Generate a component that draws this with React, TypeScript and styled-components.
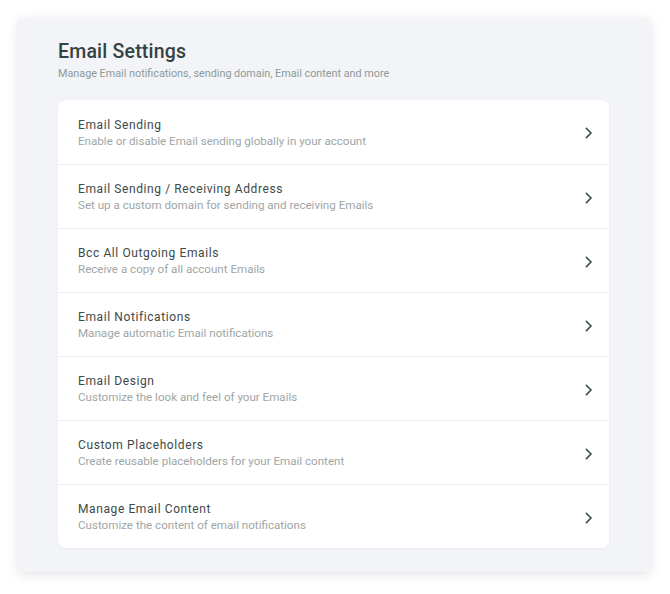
import React from 'react';
import styled, { createGlobalStyle } from 'styled-components';

const GlobalStyle = createGlobalStyle`
  html, body {
    margin: 0;
    padding: 0;
    background: #ffffff;
  }
  body {
    font-family: Roboto, 'Noto Sans', Arial, sans-serif;
    -webkit-font-smoothing: antialiased;
  }
`;

const Page = styled.div`
  padding: 19px 20px 21px 19px;
`;

const Panel = styled.section`
  background: #f2f4f7;
  box-shadow: 0 2px 12px rgba(0, 0, 0, 0.12);
  padding: 21px 41px 24px 39px;
`;

const Header = styled.header`
  margin-bottom: 18px;
`;

const Title = styled.h1`
  margin: 0;
  font-size: 19.5px;
  font-weight: 500;
  line-height: 24px;
  color: #34433f;
  letter-spacing: 0.2px;
`;

const Subtitle = styled.p`
  margin: 2px 0 0;
  font-size: 10.8px;
  line-height: 16px;
  color: #8f9997;
`;

const Card = styled.ul`
  list-style: none;
  margin: 0;
  padding: 0;
  background: #ffffff;
  border-radius: 8px;
  box-shadow: 0 1px 3px rgba(0, 0, 0, 0.05);
  overflow: hidden;
`;

const Row = styled.li`
  display: flex;
  align-items: center;
  height: 64px;
  box-sizing: border-box;
  padding: 2px 16px 0 20px;
  cursor: pointer;
  & + & {
    border-top: 1px solid #eef0f2;
  }
`;

const RowText = styled.div`
  flex: 1;
  display: flex;
  flex-direction: column;
`;

const RowTitle = styled.span`
  font-size: 12px;
  line-height: 16px;
  color: #3d4946;
  letter-spacing: 0.6px;
`;

const RowDesc = styled.span`
  font-size: 11.6px;
  line-height: 17px;
  color: #9ea6a5;
`;

const Chevron = () => (
  <svg width="8" height="12" viewBox="0 0 8 12" fill="none">
    <path d="M1.5 1.5 L6 6 L1.5 10.5" stroke="#3d4c49" strokeWidth="1.6" strokeLinecap="square" />
  </svg>
);

const items = [
  { title: 'Email Sending', desc: 'Enable or disable Email sending globally in your account' },
  { title: 'Email Sending / Receiving Address', desc: 'Set up a custom domain for sending and receiving Emails' },
  { title: 'Bcc All Outgoing Emails', desc: 'Receive a copy of all account Emails' },
  { title: 'Email Notifications', desc: 'Manage automatic Email notifications' },
  { title: 'Email Design', desc: 'Customize the look and feel of your Emails' },
  { title: 'Custom Placeholders', desc: 'Create reusable placeholders for your Email content' },
  { title: 'Manage Email Content', desc: 'Customize the content of email notifications' },
];

export default function App() {
  return (
    <>
      <GlobalStyle />
      <Page>
        <Panel>
          <Header>
            <Title>Email Settings</Title>
            <Subtitle>Manage Email notifications, sending domain, Email content and more</Subtitle>
          </Header>
          <Card>
            {items.map(item => (
              <Row key={item.title}>
                <RowText>
                  <RowTitle>{item.title}</RowTitle>
                  <RowDesc>{item.desc}</RowDesc>
                </RowText>
                <Chevron />
              </Row>
            ))}
          </Card>
        </Panel>
      </Page>
    </>
  );
}
